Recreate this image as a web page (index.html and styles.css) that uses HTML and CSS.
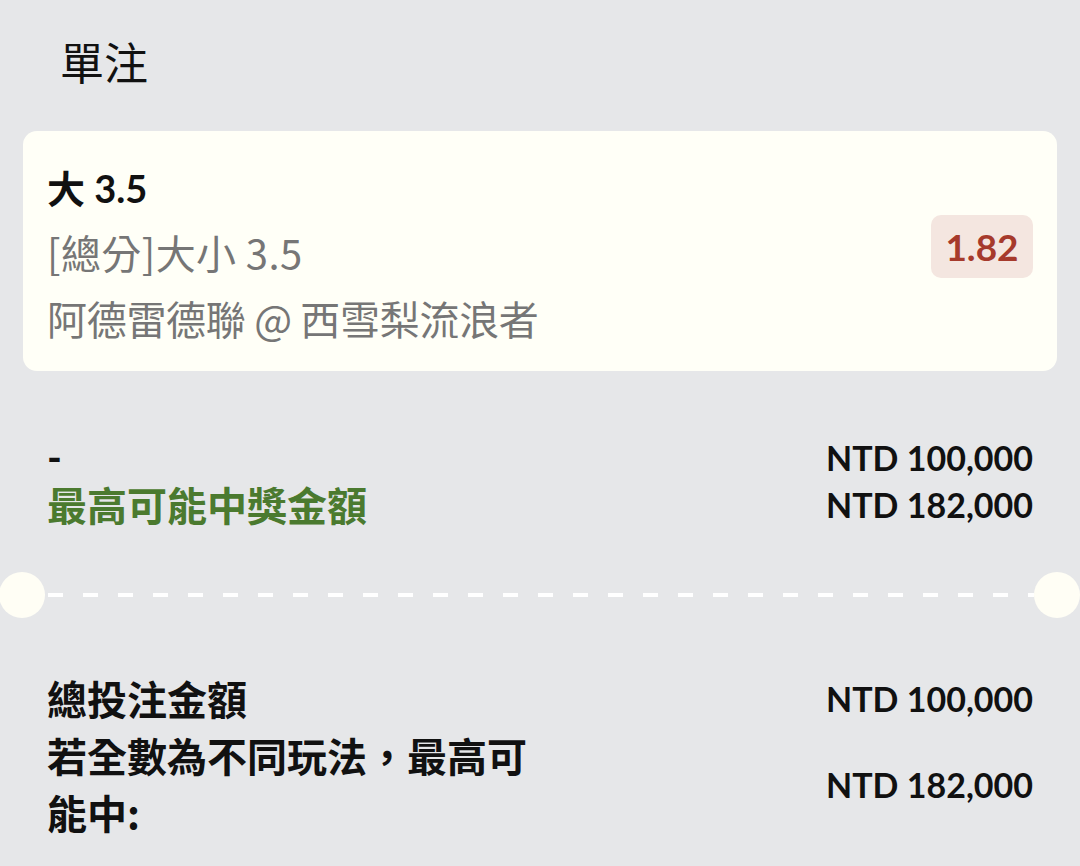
FILE: index.html
```html
<!DOCTYPE html>
<html lang="zh-Hant">
<head>
<meta charset="utf-8">
<link rel="stylesheet" href="styles.css">
</head>
<body>
<div class="page">
  <h1 class="title">單注</h1>
  <div class="card">
    <div class="card-info">
      <div class="pick">大 3.5</div>
      <div class="market">[總分]大小 3.5</div>
      <div class="match">阿德雷德聯 @ 西雪梨流浪者</div>
    </div>
    <div class="odds">1.82</div>
  </div>

  <div class="summary">
    <div class="row">
      <div class="label dash">-</div>
      <div class="amount">NTD 100,000</div>
    </div>
    <div class="row">
      <div class="label green">最高可能中獎金額</div>
      <div class="amount">NTD 182,000</div>
    </div>
  </div>

  <div class="divider">
    <span class="notch"></span>
    <span class="dashes"></span>
    <span class="notch"></span>
  </div>

  <div class="totals">
    <div class="row tall">
      <div class="label wide">總投注金額</div>
      <div class="amount">NTD 100,000</div>
    </div>
    <div class="row tall">
      <div class="label wide">若全數為不同玩法，最高可能中:</div>
      <div class="amount">NTD 182,000</div>
    </div>
  </div>
</div>
</body>
</html>
```

FILE: styles.css
```css
* { box-sizing: border-box; }
html, body {
  margin: 0;
  padding: 0;
  background: #e6e7e9;
}
body {
  width: 1080px;
  height: 866px;
  overflow: hidden;
  font-family: "Noto Sans CJK TC", "Noto Sans", sans-serif;
  color: #111;
}
.page {
  display: flex;
  flex-direction: column;
}
.title {
  margin: 0;
  padding: 30px 0 0 60px;
  font-size: 44px;
  font-weight: 400;
  line-height: 62px;
  color: #111;
}
.card {
  margin: 39px 23px 0 23px;
  background: #fffff7;
  border-radius: 14px;
  padding: 26px 24px 20px 24px;
  display: flex;
  align-items: center;
  justify-content: space-between;
}
.card-info {
  display: flex;
  flex-direction: column;
}
.pick {
  font-family: Lato, "Noto Sans CJK TC", sans-serif;
  font-weight: 700;
  font-size: 38px;
  line-height: 62px;
  color: #111;
}
.market, .match {
  font-family: "Noto Sans CJK TC", sans-serif;
  font-size: 40px;
  line-height: 66px;
  color: #767676;
}
.market { letter-spacing: 0.4px; }
.match { letter-spacing: -0.3px; }
.odds {
  font-family: Lato, sans-serif;
  font-weight: 700;
  font-size: 37px;
  color: #a63a2c;
  background: #f4e6e0;
  border-radius: 10px;
  width: 102px;
  height: 63px;
  display: flex;
  align-items: center;
  justify-content: center;
  margin-top: -16px;
}
.summary {
  margin-top: 63px;
  padding: 0 47px;
  display: flex;
  flex-direction: column;
}
.row {
  display: flex;
  justify-content: space-between;
  align-items: center;
}
.label {
  font-weight: 700;
  font-size: 40px;
  line-height: 47px;
  color: #111;
}
.label.dash { font-family: Lato, sans-serif; }
.label.green { color: #4b7a2f; }
.amount {
  font-family: Lato, sans-serif;
  font-weight: 700;
  font-size: 34px;
  line-height: 47px;
  color: #111;
}
.divider {
  margin-top: 44px;
  display: flex;
  align-items: center;
}
.notch {
  flex: none;
  width: 46px;
  height: 46px;
  border-radius: 50%;
  background: #fffef5;
}
.notch:first-child { margin-left: -1px; }
.dashes {
  flex: 1;
  height: 4px;
  background: repeating-linear-gradient(to right, transparent 0 3px, #ffffff 3px 18px, transparent 18px 35px);
}
.totals {
  margin-top: 52px;
  padding: 0 47px;
  display: flex;
  flex-direction: column;
}
.tall .label { line-height: 57px; }
.label.wide { width: 500px; }
```
